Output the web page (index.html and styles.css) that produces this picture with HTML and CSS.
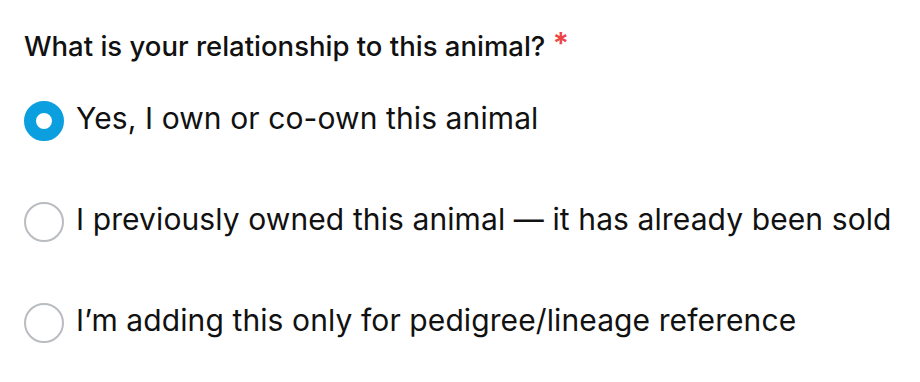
FILE: index.html
```html
<!DOCTYPE html>
<html lang="en">
<head>
    <meta charset="UTF-8">
    <meta name="viewport" content="width=device-width, initial-scale=1.0">
    <title>Animal Relationship</title>
    <link rel="stylesheet" href="styles.css">
</head>
<body>
    <form class="question">
        <p class="question-label">What is your relationship to this animal? <span class="required">*</span></p>
        <div class="options">
            <label class="option">
                <input type="radio" name="relationship" value="owner" checked>
                <span class="radio"></span>
                <span class="option-text">Yes, I own or co-own this animal</span>
            </label>
            <label class="option">
                <input type="radio" name="relationship" value="previous">
                <span class="radio"></span>
                <span class="option-text">I previously owned this animal — it has already been sold</span>
            </label>
            <label class="option">
                <input type="radio" name="relationship" value="reference">
                <span class="radio"></span>
                <span class="option-text">I’m adding this only for pedigree/lineage reference</span>
            </label>
        </div>
    </form>
</body>
</html>
```

FILE: styles.css
```css
body {
    font-family: Inter, "Noto Sans", sans-serif;
    background-color: #ffffff;
    color: #111111;
    margin: 0;
}

.question {
    padding: 27px 0 0 24px;
}

.question-label {
    font-size: 27.5px;
    font-weight: 450;
    line-height: 32px;
    margin: 0 0 39px 0;
}

.required {
    color: #ef4444;
    font-size: 30px;
    font-weight: 600;
    vertical-align: 2px;
}

.options {
    display: flex;
    flex-direction: column;
    gap: 61px;
}

.option {
    display: flex;
    align-items: center;
    gap: 12px;
    height: 40px;
    cursor: pointer;
}

.option input {
    display: none;
}

.radio {
    width: 40px;
    height: 40px;
    box-sizing: border-box;
    border-radius: 50%;
    border: 2px solid #b9bcc0;
    background-color: #ffffff;
    flex-shrink: 0;
}

.option input:checked + .radio {
    border: 12px solid #0b9fe0;
}

.option-text {
    font-size: 30px;
    letter-spacing: 0.1px;
    margin-bottom: 7px;
}
```
